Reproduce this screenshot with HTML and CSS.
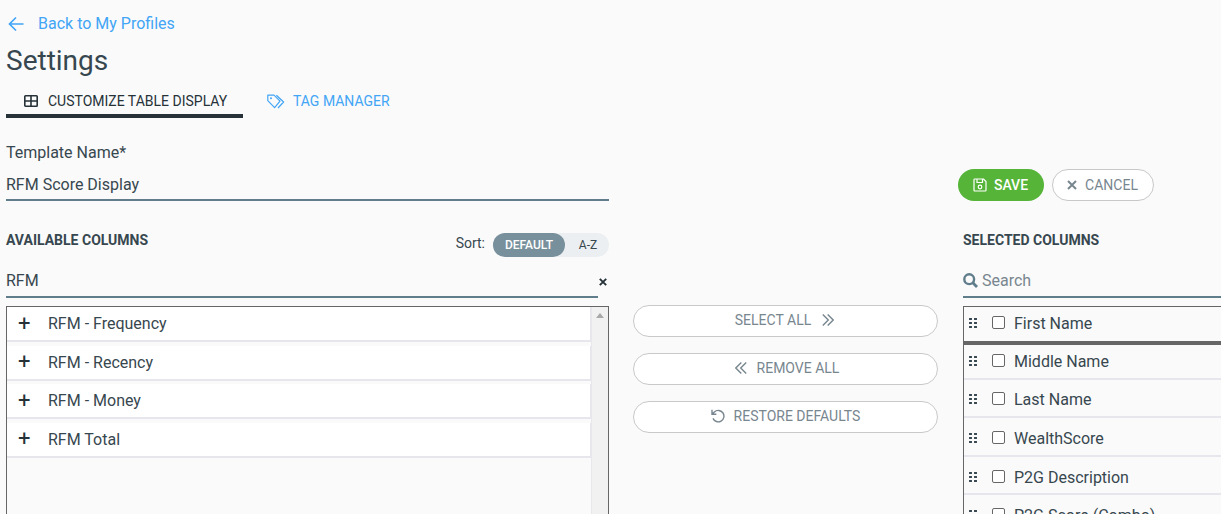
FILE: index.html
```html
<!DOCTYPE html>
<html lang="en">
<head>
<meta charset="utf-8">
<title>Settings</title>
<link rel="stylesheet" href="styles.css">
</head>
<body>
<div class="page">
  <a class="back" href="#">
    <svg class="back-icon" viewBox="0 0 16 16" width="16" height="16"><path d="M15.5 8H1.5M8 1.5L1.5 8L8 14.5" fill="none" stroke="currentColor" stroke-width="1.7"/></svg>
    <span>Back to My Profiles</span>
  </a>
  <h1 class="title">Settings</h1>
  <nav class="tabs">
    <a class="tab tab-active" href="#">
      <svg viewBox="0 0 14 12" width="14" height="12"><path d="M1.5 .8H12.5A.7.7 0 0 1 13.2 1.5V10.5A.7.7 0 0 1 12.5 11.2H1.5A.7.7 0 0 1 .8 10.5V1.5A.7.7 0 0 1 1.5 .8ZM7 1V11M1 6H13" fill="none" stroke="currentColor" stroke-width="1.6"/></svg>
      <span>CUSTOMIZE TABLE DISPLAY</span>
    </a>
    <a class="tab tab-link" href="#">
      <svg viewBox="0 0 18 15" width="18" height="15"><path d="M.8 1.2H7L13 7.2L7.6 13.6L.8 6.6ZM9.4 1.2L16.6 8L11 14" fill="none" stroke="currentColor" stroke-width="1.2" stroke-linejoin="round"/><circle cx="4" cy="4.3" r="1" fill="currentColor"/></svg>
      <span>TAG MANAGER</span>
    </a>
  </nav>

  <div class="template-row">
    <div class="template-field">
      <label class="field-label">Template Name*</label>
      <div class="text-input template-input">RFM Score Display</div>
    </div>
    <div class="actions">
      <button class="btn btn-save">
        <svg viewBox="0 0 14 14" width="14" height="14"><path d="M1.8 1H10.5L13 3.5V12.2A.8.8 0 0 1 12.2 13H1.8A.8.8 0 0 1 1 12.2V1.8A.8.8 0 0 1 1.8 1ZM4 1V4.5H9.5V1" fill="none" stroke="currentColor" stroke-width="1.2"/><circle cx="7" cy="9" r="1.8" fill="none" stroke="currentColor" stroke-width="1.2"/></svg>
        SAVE
      </button>
      <button class="btn btn-cancel">
        <svg viewBox="0 0 10 10" width="10" height="10"><path d="M1 1L9 9M9 1L1 9" fill="none" stroke="currentColor" stroke-width="2"/></svg>
        CANCEL
      </button>
    </div>
  </div>

  <div class="columns">
    <section class="col-available">
      <div class="col-head">
        <h2 class="col-title">AVAILABLE COLUMNS</h2>
        <div class="sort">
          <span class="sort-label">Sort:</span>
          <div class="sort-toggle">
            <span class="sort-opt sort-on">DEFAULT</span>
            <span class="sort-opt">A-Z</span>
          </div>
        </div>
      </div>
      <div class="search-row">
        <div class="text-input search-input">RFM</div>
        <svg class="clear" viewBox="0 0 8 8" width="8" height="8"><path d="M.8 .8L7.2 7.2M7.2 .8L.8 7.2" fill="none" stroke="currentColor" stroke-width="1.9"/></svg>
      </div>
      <div class="list list-available">
        <div class="rows">
          <div class="row"><span class="plus">+</span>RFM - Frequency</div>
          <div class="row"><span class="plus">+</span>RFM - Recency</div>
          <div class="row"><span class="plus">+</span>RFM - Money</div>
          <div class="row"><span class="plus">+</span>RFM Total</div>
        </div>
        <div class="scrollbar"><i class="scroll-arrow"></i></div>
      </div>
    </section>

    <section class="col-middle">
      <button class="wide-btn btn-select">SELECT ALL
        <svg viewBox="0 0 12 12" width="12" height="12"><path d="M.8 .5L6.3 6L.8 11.5M5.7 .5L11.2 6L5.7 11.5" fill="none" stroke="currentColor" stroke-width="1.4"/></svg>
      </button>
      <button class="wide-btn btn-remove">
        <svg viewBox="0 0 12 12" width="12" height="12"><path d="M11.2 .5L5.7 6L11.2 11.5M6.3 .5L.8 6L6.3 11.5" fill="none" stroke="currentColor" stroke-width="1.4"/></svg>
        REMOVE ALL</button>
      <button class="wide-btn">
        <svg viewBox="0 0 14 14" width="14" height="14"><path d="M2 9.4A5.7 5.7 0 1 0 3.4 2.9L1.2 5M1 .8V5.2H5.4" fill="none" stroke="currentColor" stroke-width="1.4"/></svg>
        RESTORE DEFAULTS</button>
    </section>

    <section class="col-selected">
      <div class="col-head">
        <h2 class="col-title">SELECTED COLUMNS</h2>
      </div>
      <div class="search-row">
        <div class="text-input selected-search">
          <svg viewBox="0 0 15 15" width="15" height="15"><circle cx="6.2" cy="6.2" r="4.9" fill="none" stroke="currentColor" stroke-width="2.4"/><path d="M9.8 9.8L14 14" stroke="currentColor" stroke-width="2.8"/></svg>
          <span class="placeholder">Search</span>
        </div>
      </div>
      <div class="list list-selected">
        <div class="row sel-row sel-first"><i class="grip"></i><i class="check"></i>First Name</div>
        <div class="row sel-row"><i class="grip"></i><i class="check"></i>Middle Name</div>
        <div class="row sel-row"><i class="grip"></i><i class="check"></i>Last Name</div>
        <div class="row sel-row"><i class="grip"></i><i class="check"></i>WealthScore</div>
        <div class="row sel-row"><i class="grip"></i><i class="check"></i>P2G Description</div>
        <div class="row sel-row"><i class="grip"></i><i class="check"></i>P2G Score (Combo)</div>
      </div>
    </section>
  </div>
</div>
</body>
</html>
```
FILE: styles.css
```css
* { box-sizing: border-box; }
html, body { margin: 0; height: 514px; overflow: hidden; }
body { background: #fafafa; font-family: Roboto, "Liberation Sans", sans-serif; color: #37474f; }
.page { padding: 14px 0 0 6px; width: 1221px; height: 514px; overflow: hidden; }

.back { display: flex; align-items: center; height: 19px; color: #42a5f5; text-decoration: none; font-size: 16px; }
.back-icon { margin: 0 14px 0 2px; }

.title { margin: 9px 0 0; font-size: 28px; font-weight: 400; line-height: 37px; height: 37px; color: #37474f; }

.tabs { display: flex; margin-top: 6px; height: 33px; }
.tab { display: flex; align-items: center; gap: 10px; font-size: 14px; text-decoration: none; height: 33px; }
.tab-active { width: 237px; padding: 3px 0 0 18px; color: #263238; border-bottom: 4px solid #263238; }
.tab-link { margin-left: 24px; gap: 8px; padding-bottom: 1px; color: #42a5f5; }

.template-row { display: flex; margin-top: 25px; }
.template-field { width: 603px; }
.field-label { display: block; font-size: 16px; line-height: 19px; height: 19px; }
.text-input { font-size: 16px; color: #37474f; border-bottom: 2px solid #607d8b; }
.template-input { margin-top: 5px; height: 34px; line-height: 35px; }
.actions { display: flex; gap: 8px; margin: 26px 0 0 349px; }

.btn { display: flex; align-items: center; justify-content: center; height: 32px; border-radius: 16px; font: 500 14px Roboto, sans-serif; padding: 0 1px 1px 0; }
.btn-save { width: 86px; gap: 7px; background: #56b538; color: #fff; border: 0; }
.btn-cancel { width: 102px; gap: 8px; background: #fff; color: #78868f; border: 1px solid #c8c8c8; font-weight: 400; }

.columns { display: grid; grid-template-columns: 603px 305px 300px; column-gap: 24px; margin-top: 32px; }
.col-selected { margin-left: 1px; }
.col-head { display: flex; justify-content: space-between; align-items: center; height: 24px; }
.col-title { margin: 0 0 10px; font-size: 14px; font-weight: 700; line-height: 16px; color: #37474f; }
.sort { display: flex; align-items: center; gap: 8px; }
.sort-label { font-size: 14px; padding-bottom: 4px; }
.sort-toggle { display: flex; width: 116px; height: 24px; background: #eceff1; border-radius: 12px; font-size: 12px; }
.sort-opt { display: flex; align-items: center; justify-content: center; flex: 1; padding-left: 2px; color: #37474f; }
.sort-on { flex: none; width: 72px; padding-left: 0; background: #78909c; color: #fff; border-radius: 12px; font-weight: 500; }

.search-row { display: flex; align-items: center; margin-top: 7px; height: 34px; }
.search-input { width: 592px; height: 34px; line-height: 34px; }
.clear { margin: 2px 0 0 1px; color: #263238; }
.selected-search { display: flex; align-items: center; gap: 4px; width: 300px; height: 34px; color: #607d8b; }
.placeholder { color: #78868f; }

.list { margin-top: 8px; border: 1px solid #666; height: 300px; overflow: hidden; }
.list-available { display: flex; }
.rows { flex: 1; }
.row { display: flex; align-items: center; height: 35px; margin-bottom: 3.5px; background: #fff; border-right: 1px solid #e6e6ec; border-bottom: 2px solid #e6e6ec; font-size: 16px; color: #37474f; }
.plus { width: 41px; padding-left: 11px; font-size: 22px; font-weight: 400; color: #263238; line-height: 1; }
.scrollbar { width: 17px; background: #f1f1f1; padding-top: 6px; border-left: 1px solid #e8e8ec; }
.scroll-arrow { display: block; width: 0; margin: 0 auto; border: 4px solid transparent; border-top: 0; border-bottom: 5px solid #a8a8a8; }

.col-middle { display: flex; flex-direction: column; gap: 16px; padding-top: 72px; }
.wide-btn { display: flex; align-items: center; justify-content: center; gap: 9px; height: 32px; background: #fff; border: 1px solid #c9c9c9; border-radius: 16px; font: 400 14px Roboto, sans-serif; color: #78868f; padding: 0 0 2px; }
.btn-select { gap: 11px; padding-right: 2px; }
.btn-remove { gap: 10px; padding-left: 3px; }

.sel-row { background: #fafafa; border-right: 0; height: 34.6px; margin-bottom: 4px; }
.sel-first { height: 38px; margin-bottom: 0; padding-bottom: 1px; border-bottom: 4px solid #666; }
.grip { width: 8px; height: 12px; margin: 0 0 1px 5px; background-image: radial-gradient(circle at 1.5px 2px, #37474f 1.1px, transparent 1.5px); background-size: 5px 4px; }
.check { width: 13px; height: 13px; margin: 0 9px 2px 15px; border: 1px solid #666; border-radius: 2px; background: #fff; }
```
